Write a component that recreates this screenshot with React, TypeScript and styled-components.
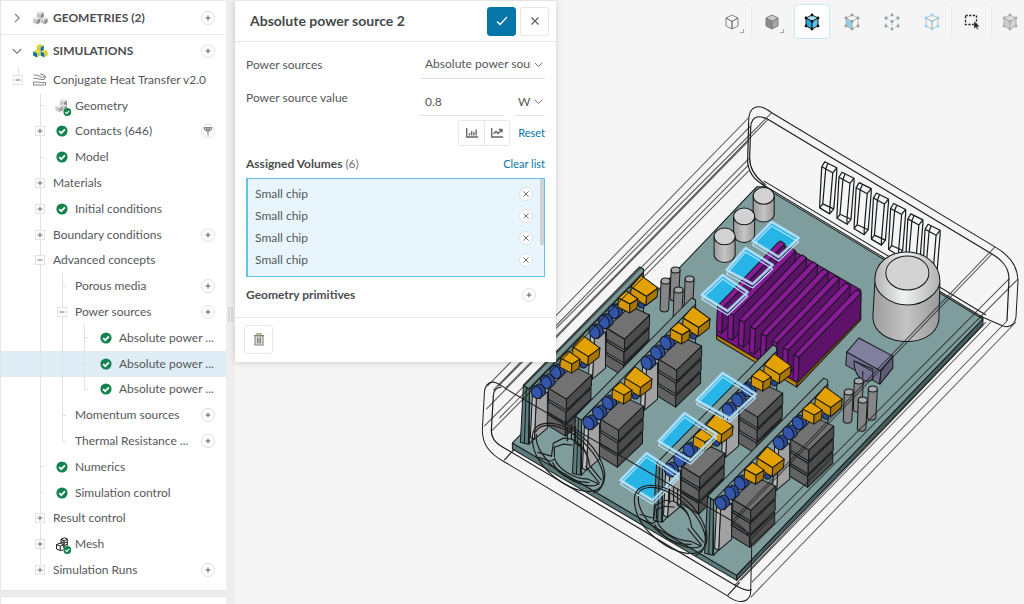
import React from "react";
import styled, { createGlobalStyle, css } from "styled-components";

const Global = createGlobalStyle`
  *, *::before, *::after { box-sizing: border-box; }
  body { margin: 0; background: #f5f5f5; color: #55585b; font: 12px/20px Lato, "Liberation Sans", sans-serif; }
  button, input, select { font: inherit; color: inherit; margin: 0; padding: 0; }
  button { cursor: pointer; }
  h2, h3, ul { margin: 0; padding: 0; font-size: inherit; }
  ul { list-style: none; }
  svg { display: block; flex: none; }
`;

const Page = styled.div`
  display: flex;
  min-height: 100vh;
  overflow: hidden;
`;

const Sidebar = styled.aside`
  flex: 0 0 226px;
  min-width: 0;
  display: flex;
  flex-direction: column;
  gap: 5px;
  background: #ebebeb;
`;

const TreePanel = styled.nav`
  background: #fff;
  border: 1px solid #e6e6e6;
  border-right: 0;
  padding-bottom: 7px;
`;

const NextPanel = styled.div`
  flex: 1;
  background: #fff;
  border: 1px solid #e6e6e6;
  border-bottom: 0;
  border-right: 0;
`;

const SectionHeader = styled.div<{ $divided?: boolean }>`
  display: flex;
  align-items: center;
  height: ${(p) => (p.$divided ? 34 : 32)}px;
  padding: 0 11px 0 8px;
  border-bottom: ${(p) => (p.$divided ? "1px solid #e9e9e9" : "0")};
  font-weight: 700;
  color: #4a4d50;
`;

const Disclosure = styled.button`
  display: grid;
  place-items: center;
  width: 16px;
  height: 16px;
  margin-right: 8px;
  border: 0;
  background: none;
  color: #77797b;
`;

const SectionTitle = styled.h2`
  flex: 1;
  margin-left: 5px;
`;

const Tree = styled.ul`
  display: grid;
  grid-auto-rows: 1fr;
  height: 516px;
`;

const TreeRow = styled.li<{ $selected?: boolean }>`
  display: flex;
  align-items: center;
  padding: 0 11px 0 6px;
  background: ${(p) => (p.$selected ? "#deedf5" : "transparent")};
`;

type Guide = "none" | "full" | "tee" | "end" | "up";

const vertical = "linear-gradient(#e2e2e2, #e2e2e2) 11px 0";
const horizontal = "linear-gradient(#e2e2e2, #e2e2e2) 11px 50%";

const GuideCell = styled.span<{ $guide: Guide }>`
  flex: 0 0 22px;
  align-self: stretch;
  display: grid;
  place-items: center;
  ${(p) => p.$guide === "full" && css`background: ${vertical} / 1px 100% no-repeat;`}
  ${(p) => p.$guide === "up" && css`background: ${vertical} / 1px 50% no-repeat;`}
  ${(p) => p.$guide === "tee" && css`background: ${vertical} / 1px 100% no-repeat, ${horizontal} / 4px 1px no-repeat;`}
  ${(p) => p.$guide === "end" && css`background: ${vertical} / 1px 50% no-repeat, ${horizontal} / 4px 1px no-repeat;`}
`;

const Toggle = styled.button`
  display: grid;
  place-items: center;
  width: 10px;
  height: 10px;
  border: 1px solid #e2e2e2;
  background: #fff;
  color: #6b6e70;
`;

const IconCell = styled.span`
  flex: 0 0 22px;
  display: grid;
  place-items: center;
`;

const RowLabel = styled.span`
  flex: 1;
  margin-left: 2px;
  white-space: nowrap;
`;

const RoundButton = styled.button`
  display: grid;
  place-items: center;
  flex: none;
  width: 14px;
  height: 14px;
  border: 1px solid #dfdfdf;
  border-radius: 50%;
  background: #fff;
  color: #5c5f62;
`;

const Plus = () => (
  <svg width="6" height="6" viewBox="0 0 6 6" stroke="currentColor" strokeWidth="1"><path d="M3 .5v5M.5 3h5" /></svg>
);
const Minus = () => (
  <svg width="6" height="6" viewBox="0 0 6 6" stroke="currentColor" strokeWidth="1"><path d="M.5 3h5" /></svg>
);
const Cross = ({ size = 6 }: { size?: number }) => (
  <svg width={size} height={size} viewBox="0 0 8 8" stroke="currentColor" strokeWidth="1.2"><path d="M.5 .5l7 7M7.5 .5l-7 7" /></svg>
);
const Chevron = ({ open = false, size = 10 }: { open?: boolean; size?: number }) => (
  <svg width={size} height={size} viewBox="0 0 10 10" fill="none" stroke="currentColor" strokeWidth="1.1">
    <path d={open ? "M.8 3l4.2 4.2L9.2 3" : "M3 .8L7.2 5 3 9.2"} />
  </svg>
);
const Check = () => (
  <svg width="12" height="12" viewBox="0 0 12 12">
    <circle cx="6" cy="6" r="5.6" fill="#14824f" />
    <path d="M3.2 6.2l2 2 3.7-3.9" fill="none" stroke="#fff" strokeWidth="1.8" />
  </svg>
);
const BadgeCheck = () => (
  <g>
    <circle cx="15.300" cy="17" r="4.300" fill="#fff" />
    <circle cx="15.300" cy="17" r="3.900" fill="#14824f" />
    <path d="M13.400 17.100l1.400 1.400 2.400-2.600" fill="none" stroke="#fff" strokeWidth="1.100" />
  </g>
);

type Tri = [string, string, string];
const MiniCube = ({ x, y, c }: { x: number; y: number; c: Tri }) => (
  <g transform={`translate(${x} ${y})`}>
    <path d="M0 1.8L3.4 0 7 1.4 3.8 3.4z" fill={c[0]} />
    <path d="M0 1.8l3.8 1.6v4.3L0 5.8z" fill={c[1]} />
    <path d="M3.8 3.4L7 1.4v4.3L3.8 7.7z" fill={c[2]} />
  </g>
);
const grey: Tri = ["#e2e2e2", "#c4c4c4", "#8f8f8f"];
const CubeStack = ({ colored = false }: { colored?: boolean }) => {
  const a: Tri = colored ? ["#e1d83a", "#0a6fa8", "#d3cf33"] : grey;
  const b: Tri = colored ? ["#dcd437", "#d3cf33", "#0a6fa8"] : grey;
  return (
    <svg width="15" height="14" viewBox="0 0 15 14">
      <MiniCube x={3.8} y={0} c={b} />
      <MiniCube x={0.2} y={5.8} c={a} />
      <MiniCube x={7.6} y={5.8} c={a} />
    </svg>
  );
};
const FlowIcon = () => (
  <svg width="14" height="13" viewBox="0 0 14 13" fill="none" stroke="#808284" strokeWidth="1">
    <path d="M.5 2h3c2 0 3 2 5 2h4M11 2l2 2-2 2M.5 5.500h3c2 0 3 1 5 1h3M7 1l4 1M.5 9h3c2 0 3 .5 5 .5h4V12H.5z" />
  </svg>
);
const GeometryIcon = () => (
  <svg width="20" height="22" viewBox="0 0 20 22">
    <MiniCube x={8} y={4} c={grey} />
    <MiniCube x={8} y={9} c={grey} />
    <MiniCube x={3.5} y={9.5} c={["#ededed", "#c9c9c9", "#a2a2a2"]} />
    <BadgeCheck />
  </svg>
);
const MeshIcon = () => (
  <svg width="20" height="22" viewBox="0 0 20 22">
    <g fill="none" stroke="#1f2123" strokeWidth="1" transform="translate(3.500 4)">
      <path d="M5.500 2.200L9 .8l2.800 1.200v9L8.500 12.600V4zM5.500 2.200L8.500 4l3.300-2M5.500 2.200v4.300M1 7.500l3.500-1.300 4 1.500v4.900l-3.700 1L1 12zM1 7.500l3.800 1.700 3.700-1.500M4.800 9.200v4.400M5.500 4.800l3 1.400 3.300-1.300M8.500 8.600l3.300-1.300" />
    </g>
    <BadgeCheck />
  </svg>
);
const ContactIcon = () => (
  <svg width="10" height="10" viewBox="0 0 10 10" fill="none" stroke="#85888a" strokeWidth="1.200">
    <path d="M1 1.500h8M1.500 1.500v2L5 5.500l3.500-2v-2M5 1.500v8M3.500 2v2.500M6.500 2v2.500" />
  </svg>
);

type Row = {
  label: string;
  guides: Guide[];
  toggle?: "+" | "-";
  icon?: "flow" | "geometry" | "check" | "mesh";
  action?: "add" | "contact";
  selected?: boolean;
};

const rows: Row[] = [
  { label: "Conjugate Heat Transfer v2.0", guides: ["up"], toggle: "-", icon: "flow" },
  { label: "Geometry", guides: ["none", "tee"], icon: "geometry" },
  { label: "Contacts (646)", guides: ["none", "full"], toggle: "+", icon: "check", action: "contact" },
  { label: "Model", guides: ["none", "tee"], icon: "check" },
  { label: "Materials", guides: ["none", "full"], toggle: "+" },
  { label: "Initial conditions", guides: ["none", "full"], toggle: "+", icon: "check" },
  { label: "Boundary conditions", guides: ["none", "full"], toggle: "+", action: "add" },
  { label: "Advanced concepts", guides: ["none", "full"], toggle: "-" },
  { label: "Porous media", guides: ["none", "full", "tee"], action: "add" },
  { label: "Power sources", guides: ["none", "full", "full"], toggle: "-", action: "add" },
  { label: "Absolute power ...", guides: ["none", "full", "full", "tee"], icon: "check" },
  { label: "Absolute power ...", guides: ["none", "full", "full", "tee"], icon: "check", selected: true },
  { label: "Absolute power ...", guides: ["none", "full", "full", "end"], icon: "check" },
  { label: "Momentum sources", guides: ["none", "full", "tee"], action: "add" },
  { label: "Thermal Resistance ...", guides: ["none", "full", "end"], action: "add" },
  { label: "Numerics", guides: ["none", "tee"], icon: "check" },
  { label: "Simulation control", guides: ["none", "tee"], icon: "check" },
  { label: "Result control", guides: ["none", "full"], toggle: "+" },
  { label: "Mesh", guides: ["none", "full"], toggle: "+", icon: "mesh" },
  { label: "Simulation Runs", guides: ["none", "up"], toggle: "+", action: "add" },
];

const rowIcons = { flow: <FlowIcon />, geometry: <GeometryIcon />, check: <Check />, mesh: <MeshIcon /> };

const TreeItem = ({ row }: { row: Row }) => (
  <TreeRow $selected={row.selected}>
    {row.guides.map((g, i) => (
      <GuideCell key={i} $guide={g}>
        {row.toggle && i === row.guides.length - 1 && (
          <Toggle aria-label={`Toggle ${row.label}`}>{row.toggle === "+" ? <Plus /> : <Minus />}</Toggle>
        )}
      </GuideCell>
    ))}
    {row.icon && <IconCell>{rowIcons[row.icon]}</IconCell>}
    <RowLabel>{row.label}</RowLabel>
    {row.action && (
      <RoundButton aria-label={row.action === "add" ? `Add to ${row.label}` : "Contact options"}>
        {row.action === "add" ? <Plus /> : <ContactIcon />}
      </RoundButton>
    )}
  </TreeRow>
);

/* ---------- viewer ---------- */

const Viewer = styled.main`
  flex: 1;
  min-width: 0;
  position: relative;
  display: flex;
  align-items: flex-start;
  overflow: hidden;
`;

const Scene = styled.svg`
  position: absolute;
  inset: 0;
  width: 100%;
  height: 100%;
`;

const Splitter = styled.div`
  flex: 0 0 9px;
  align-self: stretch;
  display: grid;
  place-items: center;
  position: relative;
  background: #eee;
`;

const Grip = styled.span`
  width: 5px;
  height: 15px;
  margin-top: 24px;
  border: solid #d9d9d9;
  border-width: 0 2px;
`;

const Panel = styled.section`
  flex: 0 0 321px;
  position: relative;
  background: #fff;
  border-top: 1px solid #e4e4e4;
  box-shadow: 0 1px 6px rgba(0, 0, 0, 0.16);
`;

const PanelHeader = styled.header`
  display: flex;
  align-items: center;
  gap: 4px;
  height: 41px;
  padding: 0 7px 0 15px;
  border-bottom: 1px solid #e6e6e6;
`;

const PanelTitle = styled.h2`
  flex: 1;
  font-size: 14px;
  color: #46494c;
`;

const SquareButton = styled.button<{ $primary?: boolean }>`
  display: grid;
  place-items: center;
  width: 29px;
  height: 29px;
  border: 1px solid ${(p) => (p.$primary ? "#0675a8" : "#e6e6e6")};
  border-radius: 3px;
  background: ${(p) => (p.$primary ? "#0675a8" : "#fff")};
  color: ${(p) => (p.$primary ? "#fff" : "#5b5e60")};
`;

const PanelBody = styled.div`
  padding: 8px 11px 12px;
  border-bottom: 1px solid #e6e6e6;
`;

const Field = styled.div<{ $tall?: boolean }>`
  display: flex;
  justify-content: space-between;
  height: ${(p) => (p.$tall ? 37 : 29)}px;
`;

const FieldLabel = styled.label<{ $drop?: boolean }>`
  padding-top: ${(p) => (p.$drop ? 9 : 5)}px;
`;

const Controls = styled.div`
  display: flex;
  gap: 11px;
`;

const SelectBox = styled.span<{ $width: number; $bottom?: boolean }>`
  display: flex;
  align-items: center;
  width: ${(p) => p.$width}px;
  padding-top: ${(p) => (p.$bottom ? 9 : 0)}px;
  border-bottom: 1px solid #e0e0e0;
`;

const Select = styled.select<{ $pad: number }>`
  appearance: none;
  flex: 1;
  min-width: 0;
  height: 20px;
  padding: 0 0 0 ${(p) => p.$pad}px;
  border: 0;
  background: none;
  outline: 0;
`;

const Arrow = styled.span`
  pointer-events: none;
  margin: 0 2px 0 3px;
  color: #707375;
`;

const ValueInput = styled.input`
  width: 83px;
  padding: 9px 0 0 4px;
  border: 0;
  border-bottom: 1px solid #e0e0e0;
  background: none;
  outline: 0;
`;

const Tools = styled.div`
  display: flex;
  align-items: center;
  justify-content: flex-end;
  gap: 8px;
  margin-top: 4px;
`;

const Segments = styled.div`
  display: flex;
  border: 1px solid #e6e6e6;
  border-radius: 3px;
`;

const Segment = styled.button`
  display: grid;
  place-items: center;
  width: 25px;
  height: 24px;
  border: 0;
  background: none;
  color: #5f6264;
  & + & { border-left: 1px solid #e6e6e6; }
`;

const TextLink = styled.a`
  font-size: 11px;
  color: #0675a8;
  text-decoration: none;
`;

const ListHeader = styled.div`
  display: flex;
  align-items: center;
  justify-content: space-between;
  margin-top: 8px;
`;

const ListTitle = styled.h3`
  color: #4a4d50;
  span { font-weight: 400; color: #707375; }
`;

const VolumeBox = styled.div`
  position: relative;
  margin-top: 4px;
  padding: 4px 11px 5px 7px;
  border: 1px solid #62c3ea;
  border-left-width: 2px;
  background: #e8f5fc;
`;

const Volume = styled.li`
  display: flex;
  align-items: center;
  justify-content: space-between;
  height: 22px;
`;

const Thumb = styled.span`
  position: absolute;
  top: 0;
  right: 0;
  width: 4px;
  height: 66px;
  background: #cfd3d5;
`;

const Primitives = styled.div`
  display: flex;
  align-items: center;
  justify-content: space-between;
  margin-top: 8px;
  padding-right: 9px;
`;

const PanelFooter = styled.footer`
  padding: 7px 9px 8px;
`;

const Toolbar = styled.div`
  flex: 1 0 auto;
  position: relative;
  display: flex;
  justify-content: flex-end;
  margin: 4px -4px 0 0;
`;

const ToolButton = styled.button<{ $active?: boolean; $narrow?: boolean }>`
  position: relative;
  display: grid;
  place-items: center;
  width: ${(p) => (p.$narrow ? 32 : 36)}px;
  height: 35px;
  margin: 0 2px;
  border: 1px solid ${(p) => (p.$active ? "#c9e8f6" : "transparent")};
  border-radius: 4px;
  background: ${(p) => (p.$active ? "#fff" : "none")};
`;

const Corner = styled.span`
  position: absolute;
  right: 5px;
  bottom: 5px;
  width: 4px;
  height: 4px;
  border: solid #a9a9a9;
  border-width: 0 1px 1px 0;
`;

const Divider = styled.span`
  width: 1px;
  height: 31px;
  margin: 2px 0 0 -1px;
  background: #e9e9e9;
`;

type CubeProps = { line: string; dot?: string; top?: string; left?: string; right?: string; dots?: boolean; dashed?: boolean };
const Cube = ({ line, dot = line, top = "none", left = "none", right = "none", dots = true, dashed }: CubeProps) => (
  <svg width="16" height="18" viewBox="0 0 16 18" stroke={line} strokeWidth=".9" strokeLinejoin="round">
    <g strokeDasharray={dashed ? "2 2.4" : undefined}>
      <path d="M8 2l6 3-6 3.500L2 5z" fill={top} />
      <path d="M2 5l6 3.500V16l-6-3z" fill={left} />
      <path d="M14 5L8 8.500V16l6-3z" fill={right} />
    </g>
    {dots &&
      [[8, 2], [14, 5], [2, 5], [8, 8.500], [2, 13], [14, 13], [8, 16]].map(([x, y]) => (
        <circle key={`${x}-${y}`} cx={x} cy={y} r="1.400" fill={dot} stroke="none" />
      ))}
  </svg>
);

const SelectIcon = () => (
  <svg width="16" height="17" viewBox="0 0 16 17">
    <rect x="1.500" y="2.500" width="11" height="9" fill="none" stroke="#222" strokeDasharray="2.200 1.500" strokeWidth="1.300" />
    <path d="M10 8v8l2-1.800 1.200 2.600 1.200-.6-1.200-2.500H16z" fill="#222" stroke="#f5f5f5" strokeWidth=".4" />
  </svg>
);

/* ---------- board model ---------- */

type Pt = [number, number];
const pts = (p: Pt[]) => p.map((q) => q.join(",")).join(" ");
const Poly = ({ p, fill }: { p: Pt[]; fill: string }) => <polygon points={pts(p)} fill={fill} />;

const Orange = ({ l, t, r, f, h }: { l: Pt; t: Pt; r: Pt; f: Pt; h: number }) => (
  <>
    <Poly p={[l, t, r, f]} fill="#e3a200" />
    <Poly p={[l, f, [f[0] - 0.5, f[1] + h], [l[0] - 0.5, l[1] + h]]} fill="#d39600" />
    <Poly p={[f, r, [r[0] - 1, r[1] + h], [f[0] - 0.5, f[1] + h]]} fill="#a87600" />
  </>
);

const Module = ({ x = 0, y = 0 }: { x?: number; y?: number }) => (
  <g transform={`translate(${x} ${y})`}>
    <Poly p={[[595, 337], [606, 332], [606, 368], [593, 379]]} fill="#a2a2a2" />
    <Poly p={[[591, 335], [595, 337], [593, 379], [589, 377]]} fill="#bdbdbd" />
    {[26, 13, 0].map((d) => (
      <g key={d} transform={`translate(${-d / 26} ${d})`}>
        <Poly p={[[607, 328], [625, 339], [625, 350], [607, 339]]} fill="#626262" />
        <Poly p={[[625, 339], [650, 315], [650, 326], [625, 350]]} fill="#4c4c4c" />
        <Poly p={[[607, 328], [631, 306], [650, 315], [625, 339]]} fill="#727272" />
      </g>
    ))}
    <circle cx="642" cy="305" r="3" fill="#2b4795" />
    {[[615.500, 311.500], [606, 321.500], [596.500, 331.500]].map(([cx, cy]) => (
      <g key={cx}>
        <path d={`M${cx - 5} ${cy - 4}l5-3.500c4-1 8 4 7.500 9.500l-5.500 5z`} fill="#2b4795" />
        <ellipse cx={cx - 1.500} cy={cy + 0.500} rx="5" ry="6.800" transform={`rotate(-28 ${cx - 1.500} ${cy + 0.500})`} fill="#3355aa" />
      </g>
    ))}
    <Orange l={[631.500, 287]} t={[641.500, 275.500]} r={[658.500, 288]} f={[647, 296.500]} h={9} />
    <Orange l={[619, 298]} t={[627, 291]} r={[638.500, 299]} f={[630.500, 304]} h={9} />
  </g>
);

const Card = ({ x = 0, y = 0 }: { x?: number; y?: number }) => (
  <g transform={`translate(${x} ${y})`}>
    <Poly p={[[530, 389], [644, 273], [644, 320], [530, 444]]} fill="#7d9b9a" />
    <Poly p={[[524, 385], [530, 389], [529, 444], [521, 442]]} fill="#5f7c7b" />
    <Poly p={[[524, 385], [640, 267], [644, 269], [644, 273], [530, 389]]} fill="#7b9896" />
    <path d="M527 387l-2 56" />
    <Module />
    <Module x={-58} y={60} />
  </g>
);

const HeatSink = () => {
  const fins = Array.from({ length: 8 }, (_, i) => i);
  return (
    <g>
      <Poly p={[[717, 335], [797, 382], [797, 387], [717, 339]]} fill="#b57b10" />
      <Poly p={[[797, 382], [861, 316], [861, 320], [797, 387]]} fill="#9a6708" />
      <Poly p={[[718, 306], [780, 243], [861, 290], [861, 316], [797, 382], [717, 335]]} fill="#7b1488" />
      {fins.map((i) => {
        const x = 718 + i * 10.9;
        const y = 306 + i * 7;
        return (
          <g key={i}>
            <Poly p={[[x + 5, y + 2], [x + 67, y - 62], [x + 66, y - 36], [x + 4, y + 27]]} fill="#5e136b" />
            <Poly p={[[x, y], [x + 5, y + 2], [x + 4, y + 27], [x - 1, y + 25]]} fill="#80148d" />
            <Poly p={[[x, y], [x + 60, y - 63], [x + 63, y - 65], [x + 67, y - 62], [x + 5, y + 2]]} fill="#8a1a98" />
          </g>
        );
      })}
    </g>
  );
};

const pads: Pt[][] = [
  [[772, 222], [799, 238], [779, 257], [753, 241]],
  [[746, 248], [773, 265], [753, 284], [727, 270]],
  [[723, 275], [748, 292], [728, 311], [702, 295]],
  [[723, 373], [756, 394], [730, 418], [697, 400]],
  [[685, 413], [717, 434], [691, 460], [659, 441]],
  [[647, 453], [679, 474], [653, 500], [621, 480]],
];

const Can = ({ x, y }: { x: number; y: number }) => (
  <g>
    <path d={`M${x - 10.500} ${y}v18a10.500 8 0 0 0 21 0v-18z`} fill="url(#can)" />
    <ellipse cx={x} cy={y} rx="10.500" ry="8.300" fill="#d2d2d2" />
  </g>
);

const Pin = ({ x, y }: { x: number; y: number }) => (
  <g>
    <path d={`M${x - 4.500} ${y}l-1 29a4.500 3 0 0 0 8.500 0l1.500-29z`} fill="#858585" />
    <ellipse cx={x} cy={y} rx="4.500" ry="3" fill="#a9a9a9" />
  </g>
);

const Fan = ({ x = 0, y = 0 }: { x?: number; y?: number }) => (
  <g transform={`translate(${x} ${y})`} fill="none" strokeWidth="1.200">
    <path d="M533 440c-1-12 6-17 17-17 18 1 38 14 48 31 8 13 10 26 3 33-8 8-27 4-43-8-15-11-24-24-25-39z" />
    <path d="M536 432c4-8 16-9 29-3 17 8 33 25 38 42 3 12-2 20-9 22M537 434c-2 11 8 26 22 37 14 11 30 18 40 13" />
    <path d="M538 452l14 4 2-13 10-5 9 1M539 457l12 4 4-2M555 457v-10l9-3 9 1M572 424v15c7 3 12 8 15 14M576 426v17c8 4 13 11 14 22l12 15M555 458c4 11 18 20 34 21l11 5M553 462c6 12 20 21 37 20M586 466l14 17M568 427v14" />
  </g>
);

const Model = () => (
  <Scene viewBox="227 0 797 604" preserveAspectRatio="xMidYMid slice" role="img" aria-label="Circuit board assembly">
    <defs>
      <linearGradient id="can">
        <stop offset="0" stopColor="#9c9c9c" />
        <stop offset=".5" stopColor="#c4c4c4" />
        <stop offset="1" stopColor="#9a9a9a" />
      </linearGradient>
      <linearGradient id="dome">
        <stop offset="0" stopColor="#b4b4b4" />
        <stop offset=".45" stopColor="#f0f2f1" />
        <stop offset="1" stopColor="#b0b0b0" />
      </linearGradient>
    </defs>
    <g stroke="#15191b" strokeWidth="1" strokeLinejoin="round">
      <Poly p={[[513, 443], [757, 187], [764, 187], [983, 319], [737, 575]]} fill="#7f9d9c" />
      <Poly p={[[513, 443], [737, 575], [737, 580], [513, 449]]} fill="#5c7a79" />
      <Poly p={[[737, 575], [983, 319], [983, 325], [737, 580]]} fill="#47605f" />
      <path d="M762 184l222 134M764 181l222 134" fill="none" />

      {pads.map((p, i) => (
        <polygon key={i} points={pts(p)} fill="#27b4e6" stroke="#8fd3f5" />
      ))}

      <g fill="none" strokeWidth="1.200">
        {Array.from({ length: 7 }, (_, i) => (
          <g key={i} transform={`translate(${i * 17.200} ${i * 10.400})`}>
            <path d="M822 167l3-5 12 6v4l-3 37-4 5-10-6v-4z" />
            <path d="M822 167l11 6 4-5M833 173l-3 36v5M820 208l3-4 11 5M828 164l-2 5-3 35" />
          </g>
        ))}
      </g>

      <Can x={764} y={196} />
      <Can x={744.500} y={216.500} />
      <Can x={725} y={236.500} />
      <Pin x={676} y={270} />
      <Pin x={690} y={279} />
      <Pin x={666} y={281} />
      <Pin x={679} y={290} />

      <HeatSink />
      <g>
        <path d="M875 283l-2 35c2 30 62 32 66 2l1-37z" fill="url(#can)" />
        <path d="M875 280c0-17 14-28 32-28s33 12 33 29c0 10-14 24-32 24s-33-12-33-25z" fill="url(#dome)" />
        <ellipse cx="907.500" cy="273" rx="21.500" ry="17" fill="#d3d3d3" />
      </g>
      <g>
        <Poly p={[[847, 352], [859, 338], [893, 356], [881, 371]]} fill="#807f9e" />
        <Poly p={[[847, 352], [881, 371], [880, 384], [846, 365]]} fill="#72718f" />
        <Poly p={[[881, 371], [893, 356], [893, 368], [880, 384]]} fill="#5d5c78" />
        <path d="M854 361c1 20 14 23 19 18v-10z" fill="#757492" />
        <path d="M855 361l17 10M863 371v7" fill="none" />
      </g>

      <Card />
      <Card x={52} y={31} />
      <Card x={133} y={78} />
      <Card x={184} y={111} />
      <Pin x={859} y={381} />
      <Pin x={873} y={389} />
      <Pin x={849} y={392} />
      <Pin x={863} y={400} />
    </g>

    <g fill="none" strokeLinejoin="round">
      {pads.map((p, i) => (
        <g key={i}>
          <polygon points={pts(p)} stroke="#9bd6f8" strokeOpacity=".8" strokeWidth="3" />
          <polygon points={pts(p.map(([x, y]) => [x, y + 4] as Pt))} stroke="#b4e0fa" strokeWidth="1.200" />
          <polygon points={pts(p)} stroke="#dcf2ff" strokeWidth=".8" />
        </g>
      ))}
    </g>

    <g fill="none" stroke="#1d1d1d" strokeWidth="1">
      <path d="M749 122c0-9 3-15 10-15 5 0 9 3 13 6l223 134c14 8 23 18 23 34l-2 36c-1 8-7 11-13 9l-23-10" />
      <path d="M751 128c0-6 3-11 8-11 4 0 7 1 10 3l223 134c10 6 17 13 17 25l-2 42M749 122l-1 40c1 14 10 20 20 26M751 128l-1 30c0 12 6 20 16 27" strokeWidth="1.200" />
      <path d="M749 118L488 386M751 126L494 390M772 113L499 386M768 120L506 388M749 141L487 409M749 159L485 426M749 165L500 418M749 171L492 431" strokeOpacity=".75" />
      <path d="M995 247L733 520M992 254L731 525M1018 279L753 546M1009 279L752 538M1007 321L752 582M1016 322L751 597M991 322L741 580M986 322L735 585" strokeOpacity=".75" />
      <path d="M483 430l2-36c0-8 4-12 9-12 5 1 9 4 13 7l226 132c13 7 19 14 19 28l-1 42c0 8-6 11-12 10-5-1-8-3-12-6L504 461c-14-8-21-17-21-31z" />
      <path d="M492 430l2-34c0-5 3-9 8-9M492 430c0 10 7 15 15 19l225 134c10 6 17 9 20 6M505 460l10-11M728 595l12-13" strokeWidth="1.200" />
      <Fan />
      <Fan x={102} y={62} />
    </g>
  </Scene>
);

const visibleVolumes = ["Small chip", "Small chip", "Small chip", "Small chip"];

const App = () => (
  <Page>
    <Global />
    <Sidebar>
      <TreePanel aria-label="Project">
        <SectionHeader $divided>
          <Disclosure aria-label="Expand geometries"><Chevron /></Disclosure>
          <CubeStack />
          <SectionTitle>GEOMETRIES (2)</SectionTitle>
          <RoundButton aria-label="Add geometry"><Plus /></RoundButton>
        </SectionHeader>
        <SectionHeader>
          <Disclosure aria-label="Collapse simulations"><Chevron open /></Disclosure>
          <CubeStack colored />
          <SectionTitle>SIMULATIONS</SectionTitle>
          <RoundButton aria-label="Add simulation"><Plus /></RoundButton>
        </SectionHeader>
        <Tree>
          {rows.map((row, i) => <TreeItem key={i} row={row} />)}
        </Tree>
      </TreePanel>
      <NextPanel />
    </Sidebar>

    <Viewer>
      <Model />
      <Splitter><Grip /></Splitter>
      <Panel>
        <PanelHeader>
          <PanelTitle>Absolute power source 2</PanelTitle>
          <SquareButton $primary aria-label="Apply">
            <svg width="12" height="10" viewBox="0 0 12 10" fill="none" stroke="currentColor" strokeWidth="1.300"><path d="M1 5.500l3 3L11 1" /></svg>
          </SquareButton>
          <SquareButton aria-label="Close"><Cross size={8} /></SquareButton>
        </PanelHeader>
        <PanelBody>
          <Field>
            <FieldLabel htmlFor="source-kind">Power sources</FieldLabel>
            <SelectBox $width={124}>
              <Select id="source-kind" $pad={4}><option>Absolute power source</option></Select>
              <Arrow><Chevron open size={9} /></Arrow>
            </SelectBox>
          </Field>
          <Field $tall>
            <FieldLabel $drop htmlFor="source-value">Power source value</FieldLabel>
            <Controls>
              <ValueInput id="source-value" defaultValue="0.8" />
              <SelectBox $width={30} $bottom>
                <Select aria-label="Unit" $pad={3}><option>W</option></Select>
                <Arrow><Chevron open size={9} /></Arrow>
              </SelectBox>
            </Controls>
          </Field>
          <Tools>
            <Segments>
              <Segment aria-label="Table input">
                <svg width="12" height="10" viewBox="0 0 12 10" fill="none" stroke="currentColor" strokeWidth="1.300"><path d="M.7 0v9H12M3.500 7.500V5M5.700 7.500V3M7.900 7.500V4M10.100 7.500V1.500" /></svg>
              </Segment>
              <Segment aria-label="Function input">
                <svg width="12" height="10" viewBox="0 0 12 10" fill="none" stroke="currentColor" strokeWidth="1.300"><path d="M.7 0v9H12M2.500 6l2.500-2.500 2 2L10.500 2M7.800 1.500H11v3" /></svg>
              </Segment>
            </Segments>
            <TextLink href="#reset">Reset</TextLink>
          </Tools>
          <ListHeader>
            <ListTitle>Assigned Volumes <span>(6)</span></ListTitle>
            <TextLink href="#clear">Clear list</TextLink>
          </ListHeader>
          <VolumeBox>
            <ul>
              {visibleVolumes.map((name, i) => (
                <Volume key={i}>
                  {name}
                  <RoundButton aria-label={`Remove ${name}`}><Cross /></RoundButton>
                </Volume>
              ))}
            </ul>
            <Thumb />
          </VolumeBox>
          <Primitives>
            <ListTitle>Geometry primitives</ListTitle>
            <RoundButton aria-label="Add primitive"><Plus /></RoundButton>
          </Primitives>
        </PanelBody>
        <PanelFooter>
          <SquareButton aria-label="Delete">
            <svg width="12" height="13" viewBox="0 0 12 13" fill="none" stroke="#8b8371" strokeWidth="1.100">
              <path d="M2 3h8v9H2z" fill="#dfeaf0" /><path d="M.8 2.500h10.400M4 2V.8h4V2M4.500 4.500v6M6 4.500v6M7.500 4.500v6" />
            </svg>
          </SquareButton>
        </PanelFooter>
      </Panel>
      <Toolbar role="toolbar" aria-label="Viewer tools">
        <ToolButton aria-label="View orientation"><Cube line="#777" dots={false} /><Corner /></ToolButton>
        <Divider />
        <ToolButton aria-label="Render mode"><Cube line="#777" top="#c9c9c9" left="#8c8c8c" right="#a6a6a6" dots={false} /><Corner /></ToolButton>
        <ToolButton $active aria-label="Pick volumes"><Cube line="#111" top="#a9dcf3" left="#27a9e1" right="#5cc0ec" /></ToolButton>
        <ToolButton aria-label="Pick faces"><Cube line="#b5b5b5" dot="#999" left="#8fd0ef" /></ToolButton>
        <ToolButton aria-label="Pick edges"><Cube line="#9fd4ec" dot="#999" dashed /></ToolButton>
        <ToolButton aria-label="Pick vertices"><Cube line="#b9b9b9" dot="#8fd3f2" /></ToolButton>
        <Divider />
        <ToolButton aria-label="Box selection"><SelectIcon /></ToolButton>
        <Divider />
        <ToolButton $narrow aria-label="Mesh view"><Cube line="#a9a9a9" top="#ddd" left="#ccc" right="#d5d5d5" /></ToolButton>
      </Toolbar>
    </Viewer>
  </Page>
);

export default App;
